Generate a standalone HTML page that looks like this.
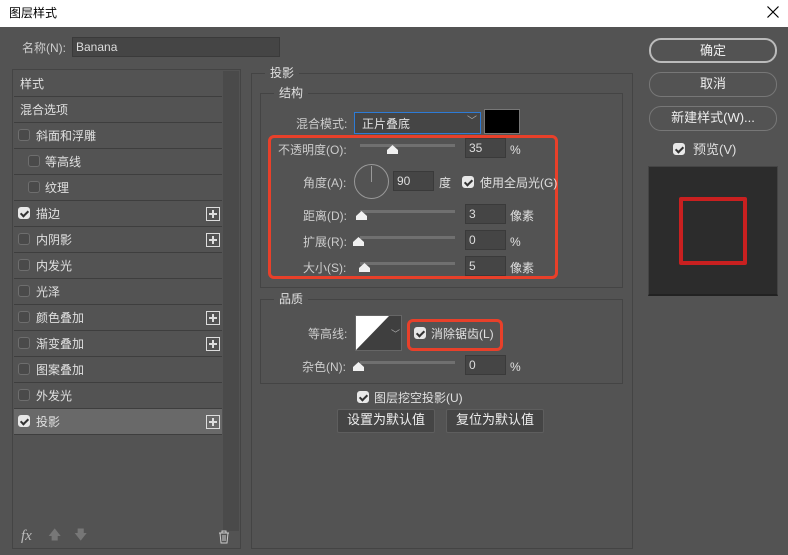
<!DOCTYPE html><html><head><meta charset="utf-8"><style>
*{margin:0;padding:0;box-sizing:border-box}
body{width:788px;height:555px;background:#535353;font-family:"Liberation Sans","Noto Sans CJK SC",sans-serif;font-size:12px;color:#e0e0e0;position:relative;overflow:hidden}
.a{position:absolute}
.t{position:absolute;white-space:nowrap;line-height:14px}
.cb{position:absolute;width:12px;height:12px;border:1px solid #6e6e6e;border-radius:3px;background:#4a4a4a}
.cb.on{background:#e8e8e8;border-color:#e8e8e8}
.cb.on:after{content:"";position:absolute;left:3px;top:1px;width:3px;height:6px;border:solid #333;border-width:0 2px 2px 0;transform:rotate(45deg)}
.row{position:absolute;left:14px;width:208px;height:26px;border-bottom:1px solid #3e3e3e}
.plus{position:absolute;right:2px;top:6px;width:14px;height:14px;border:1px solid #ddd}
.plus:before{content:"";position:absolute;left:2px;top:5px;width:8px;height:2px;background:#ddd}
.plus:after{content:"";position:absolute;left:5px;top:2px;width:2px;height:8px;background:#ddd}
.inp{position:absolute;height:20px;background:#454545;border:1px solid #3a3a3a;color:#ddd;padding-left:3px;line-height:18px}
.sl{position:absolute;height:3px;background:#707070}
.th{position:absolute;width:0;height:0}
.th:before{content:"";position:absolute;left:0;top:0;width:11px;height:9px;background:#f0f0f0;clip-path:polygon(50% 0,100% 55%,100% 100%,0 100%,0 55%)}
.btn{position:absolute;border:1px solid #777;border-radius:12px;color:#eee;text-align:center;line-height:22px;font-size:13px}
.b2{position:absolute;background:#454545;border:1px solid #5e5e5e;border-radius:2px;text-align:center;line-height:20px;font-size:13px;color:#eee}
.grp{position:absolute;border:1px solid #444}
.lg{position:absolute;background:#535353;padding:0 5px;line-height:14px}
</style></head><body>
<div class="a" style="left:0;top:0;width:788px;height:27px;background:#fff"></div>
<div class="t" style="left:9px;top:6px;color:#000;font-size:12px">图层样式</div>
<svg class="a" style="left:767px;top:6px" width="12" height="12"><path d="M0.5 0.5L11.5 11.5M11.5 0.5L0.5 11.5" stroke="#000" stroke-width="1.2"/></svg>
<div class="t" style="left:22px;top:41px;color:#ccc">名称(N):</div>
<div class="inp" style="left:72px;top:37px;width:208px;">Banana</div>
<!-- left panel -->
<div class="a" style="left:12px;top:69px;width:229px;height:480px;border:1px solid #444"></div>
<div class="a" style="left:223px;top:71px;width:16px;height:460px;background:#4a4a4a"></div>
<div class="row" style="top:71px"><span class="t" style="left:6px;top:6px">样式</span></div>
<div class="row" style="top:97px"><span class="t" style="left:6px;top:6px">混合选项</span></div>
<div class="row" style="top:123px"><span class="cb" style="left:4px;top:6px"></span><span class="t" style="left:22px;top:6px">斜面和浮雕</span></div>
<div class="row" style="top:149px"><span class="cb" style="left:14px;top:6px"></span><span class="t" style="left:31px;top:6px">等高线</span></div>
<div class="row" style="top:175px"><span class="cb" style="left:14px;top:6px"></span><span class="t" style="left:31px;top:6px">纹理</span></div>
<div class="row" style="top:201px"><span class="cb on" style="left:4px;top:6px"></span><span class="t" style="left:22px;top:6px">描边</span><span class="plus"></span></div>
<div class="row" style="top:227px"><span class="cb" style="left:4px;top:6px"></span><span class="t" style="left:22px;top:6px">内阴影</span><span class="plus"></span></div>
<div class="row" style="top:253px"><span class="cb" style="left:4px;top:6px"></span><span class="t" style="left:22px;top:6px">内发光</span></div>
<div class="row" style="top:279px"><span class="cb" style="left:4px;top:6px"></span><span class="t" style="left:22px;top:6px">光泽</span></div>
<div class="row" style="top:305px"><span class="cb" style="left:4px;top:6px"></span><span class="t" style="left:22px;top:6px">颜色叠加</span><span class="plus"></span></div>
<div class="row" style="top:331px"><span class="cb" style="left:4px;top:6px"></span><span class="t" style="left:22px;top:6px">渐变叠加</span><span class="plus"></span></div>
<div class="row" style="top:357px"><span class="cb" style="left:4px;top:6px"></span><span class="t" style="left:22px;top:6px">图案叠加</span></div>
<div class="row" style="top:383px"><span class="cb" style="left:4px;top:6px"></span><span class="t" style="left:22px;top:6px">外发光</span></div>
<div class="row" style="top:409px;background:#696969"><span class="cb on" style="left:4px;top:6px"></span><span class="t" style="left:22px;top:6px">投影</span><span class="plus"></span></div>
<div class="t" style="left:21px;top:529px;font-style:italic;font-family:'Liberation Serif',serif;font-size:15px;color:#bbb">fx</div>
<div class="t" style="left:48px;top:528px;color:#777;font-size:13px">🡅</div>
<div class="t" style="left:74px;top:528px;color:#777;font-size:13px">🡇</div>
<svg class="a" style="left:218px;top:530px" width="12" height="14"><path d="M1 3h10M4 3V1h4v2M2 3l1 10h6l1-10M5 5v6M7 5v6" stroke="#ccc" fill="none"/></svg>
<!-- right group -->
<div class="grp" style="left:251px;top:73px;width:382px;height:476px"></div>
<div class="lg" style="left:265px;top:66px">投影</div>
<div class="grp" style="left:260px;top:93px;width:363px;height:195px"></div>
<div class="lg" style="left:274px;top:86px">结构</div>
<div class="t" style="left:296px;top:117px;color:#ccc">混合模式:</div>
<div class="a" style="left:354px;top:112px;width:127px;height:22px;background:#454545;border:1px solid #2d7bd6"></div>
<div class="t" style="left:362px;top:117px">正片叠底</div>
<div class="t" style="left:467px;top:115px;color:#aaa;font-size:10px">﹀</div>
<div class="a" style="left:484px;top:109px;width:36px;height:25px;background:#000;border:1px solid #777"></div>
<div class="a" style="left:268px;top:135px;width:290px;height:144px;border:3px solid #e8402a;border-radius:6px"></div>
<div class="t" style="left:278px;top:143px;color:#ccc">不透明度(O):</div>
<div class="sl" style="left:360px;top:144px;width:95px"></div><div class="th" style="left:387px;top:145px"></div>
<div class="inp" style="left:465px;top:138px;width:41px">35</div><div class="t" style="left:510px;top:143px">%</div>
<div class="t" style="left:303px;top:176px;color:#ccc">角度(A):</div>
<div class="a" style="left:354px;top:164px;width:35px;height:35px;border:1px solid #999;border-radius:50%"></div>
<div class="a" style="left:371px;top:166px;width:1px;height:16px;background:#999"></div>
<div class="inp" style="left:393px;top:171px;width:41px">90</div>
<div class="t" style="left:439px;top:176px">度</div>
<div class="cb on" style="left:462px;top:176px"></div>
<div class="t" style="left:480px;top:176px">使用全局光(G)</div>
<div class="t" style="left:303px;top:209px;color:#ccc">距离(D):</div>
<div class="sl" style="left:360px;top:210px;width:95px"></div><div class="th" style="left:356px;top:211px"></div>
<div class="inp" style="left:465px;top:204px;width:41px">3</div><div class="t" style="left:510px;top:209px">像素</div>
<div class="t" style="left:303px;top:235px;color:#ccc">扩展(R):</div>
<div class="sl" style="left:360px;top:236px;width:95px"></div><div class="th" style="left:353px;top:237px"></div>
<div class="inp" style="left:465px;top:230px;width:41px">0</div><div class="t" style="left:510px;top:235px">%</div>
<div class="t" style="left:303px;top:261px;color:#ccc">大小(S):</div>
<div class="sl" style="left:360px;top:262px;width:95px"></div><div class="th" style="left:359px;top:263px"></div>
<div class="inp" style="left:465px;top:256px;width:41px">5</div><div class="t" style="left:510px;top:261px">像素</div>
<!-- quality -->
<div class="grp" style="left:260px;top:299px;width:363px;height:85px"></div>
<div class="lg" style="left:274px;top:292px">品质</div>
<div class="t" style="left:308px;top:327px;color:#ccc">等高线:</div>
<div class="a" style="left:355px;top:315px;width:47px;height:36px;border:1px solid #666;background:#3f3f3f"></div>
<svg class="a" style="left:356px;top:316px" width="33" height="34"><polygon points="0,0 33,0 0,34" fill="#fff"/></svg>
<div class="t" style="left:391px;top:327px;color:#aaa;font-size:9px">﹀</div>
<div class="a" style="left:407px;top:319px;width:96px;height:32px;border:3px solid #e8402a;border-radius:6px"></div>
<div class="cb on" style="left:414px;top:327px"></div>
<div class="t" style="left:431px;top:327px">消除锯齿(L)</div>
<div class="t" style="left:302px;top:360px;color:#ccc">杂色(N):</div>
<div class="sl" style="left:360px;top:361px;width:95px"></div><div class="th" style="left:353px;top:362px"></div>
<div class="inp" style="left:465px;top:355px;width:41px">0</div><div class="t" style="left:510px;top:360px">%</div>
<div class="cb on" style="left:357px;top:391px"></div>
<div class="t" style="left:374px;top:391px">图层挖空投影(U)</div>
<div class="b2" style="left:337px;top:409px;width:98px;height:24px">设置为默认值</div>
<div class="b2" style="left:446px;top:409px;width:98px;height:24px">复位为默认值</div>
<!-- right column -->
<div class="btn" style="left:649px;top:38px;width:128px;height:25px;border-color:#bbb;border-width:2px">确定</div>
<div class="btn" style="left:649px;top:72px;width:128px;height:25px">取消</div>
<div class="btn" style="left:649px;top:106px;width:128px;height:25px">新建样式(W)...</div>
<div class="cb on" style="left:673px;top:143px"></div>
<div class="t" style="left:693px;top:143px;font-size:13px">预览(V)</div>
<div class="a" style="left:648px;top:166px;width:130px;height:130px;background:#2c2c2c;border:1px solid #444;border-bottom:2px solid #222"></div>
<div class="a" style="left:679px;top:197px;width:68px;height:68px;border:4px solid #c92020;border-radius:2px"></div>
</body></html>
